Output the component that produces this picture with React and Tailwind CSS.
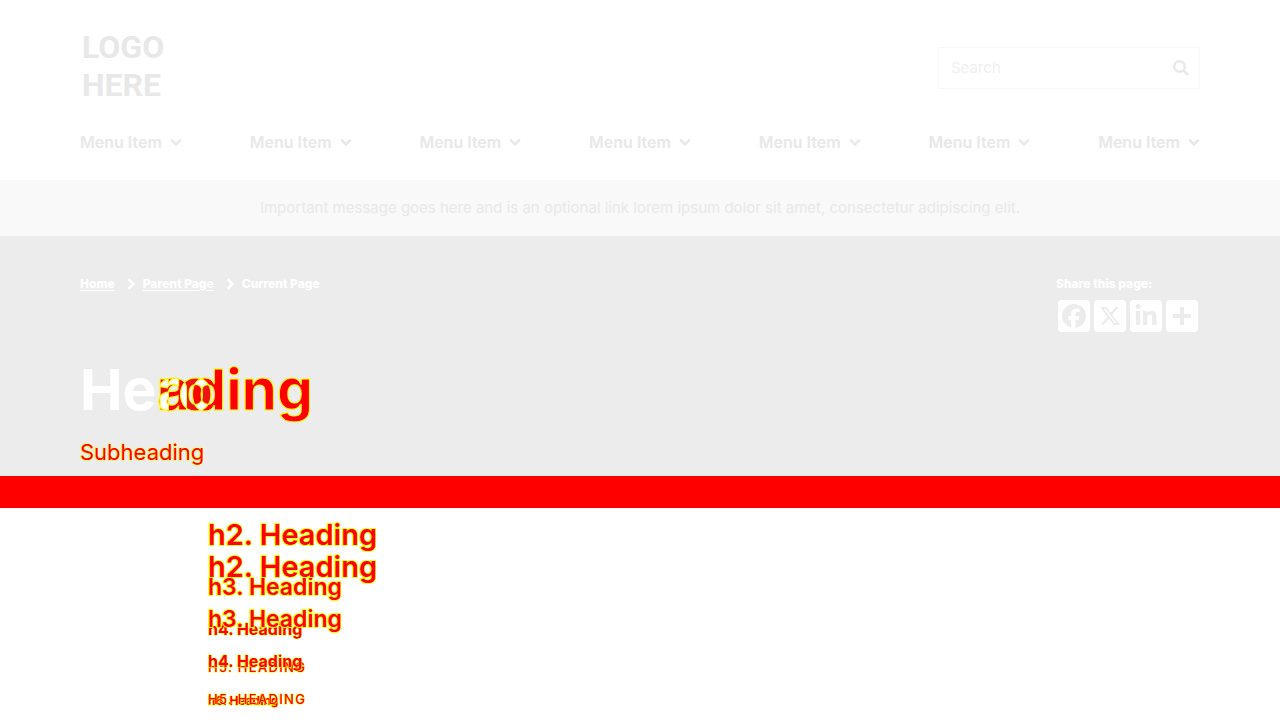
import React from "react";
import { FaFacebook, FaLinkedinIn, FaXTwitter } from "react-icons/fa6";

const menu = [1, 2, 3, 4, 5, 6, 7];

function Chevron({ className }) {
  return (
    <svg viewBox="0 0 12 12" aria-hidden="true" className={className} fill="none" stroke="currentColor" strokeWidth="2.6">
      <path d="M1.2 3.6 6 8.4l4.8-4.8" />
    </svg>
  );
}

function Share({ label, children }) {
  return (
    <a href="#share" aria-label={label} className="flex size-8 items-center justify-center rounded bg-white text-[#ececec]">
      {children}
    </a>
  );
}

function Headings({ className, last }) {
  return (
    <div className={`col-start-1 row-start-1 text-[#ff0000] [paint-order:stroke] ${className}`}>
      <h2 className="h-[52px] text-[29px] leading-9 font-semibold [-webkit-text-stroke:2px_#ffff00]">h2. Heading</h2>
      <h3 className="h-12 pt-0.5 text-[23px] leading-8 font-semibold [-webkit-text-stroke:2px_#ffff00]">h3. Heading</h3>
      <h4 className="h-[38px] text-base leading-6 font-bold [-webkit-text-stroke:1px_#ffff00]">h4. Heading</h4>
      <h5 className="h-[34px] pt-0.5 text-[13px] leading-5 font-medium tracking-widest uppercase [-webkit-text-stroke:1px_#ffff00]">h5. Heading</h5>
      {last && <h6 className="pt-0.5 text-xs leading-5 font-bold [-webkit-text-stroke:1px_#ffff00]">h6. Heading</h6>}
    </div>
  );
}

export default function App() {
  return (
    <div className="h-screen overflow-hidden bg-white font-['Inter',sans-serif] text-base text-[#e8e8e8]">
      <header className="px-20">
        <div className="flex h-[124px] items-center justify-between pt-3">
          <a href="#home" className="pb-1 pl-0.5 font-['Roboto',sans-serif] text-[32px] leading-[38px] font-bold">
            LOGO<br />HERE
          </a>
          <form className="flex h-[42px] w-[262px] items-center border border-[#f7f7f7] px-3" role="search">
            <input type="text" aria-label="Search" placeholder="Search" className="min-w-0 flex-1 bg-transparent text-[15px] outline-none placeholder:text-[#f0f0f0]" />
            <button type="submit" aria-label="Submit search" className="-mr-0.5">
              <svg viewBox="0 0 16 16" className="size-4" fill="none" stroke="currentColor" strokeWidth="2.4">
                <circle cx="6.5" cy="6.5" r="5.2" />
                <path d="m10.4 10.4 4.6 4.6" />
              </svg>
            </button>
          </form>
        </div>
        <nav className="flex h-14 items-start justify-between pt-1.5">
          {menu.map((n) => (
            <button key={n} type="button" className="flex items-center gap-2 leading-6 font-semibold">
              Menu Item
              <Chevron className="size-3" />
            </button>
          ))}
        </nav>
      </header>
      <div className="flex h-14 items-center justify-center bg-[#f9f9f9]">
        <p className="text-[15px] leading-6">Important message goes here and is an optional link lorem ipsum dolor sit amet, consectetur adipiscing elit.</p>
      </div>
      <section className="h-60 bg-[#ececec] px-20 pt-[38px] text-white">
        <div className="flex h-20 justify-between text-xs leading-5 font-extrabold">
          <nav aria-label="Breadcrumb" className="flex h-5 items-center gap-1.5">
            <a href="#home" className="underline underline-offset-2">Home</a>
            <Chevron className="ml-1 size-3 -rotate-90" />
            <a href="#parent" className="underline underline-offset-2">Parent Page</a>
            <Chevron className="ml-1 size-3 -rotate-90" />
            <span>Current Page</span>
          </nav>
          <div className="w-36">
            <p>Share this page:</p>
            <div className="mt-1.5 flex gap-1 px-0.5">
              <Share label="Facebook"><FaFacebook className="size-6" /></Share>
              <Share label="X"><FaXTwitter className="size-[22px]" /></Share>
              <Share label="LinkedIn"><FaLinkedinIn className="size-6" /></Share>
              <Share label="More">
                <svg viewBox="0 0 18 18" className="size-[18px]" fill="currentColor">
                  <path d="M7 0h4v7h7v4h-7v7H7v-7H0V7h7z" />
                </svg>
              </Share>
            </div>
          </div>
        </div>
        <div className="isolate grid bg-[#ececec] text-[57px] leading-[72px] font-bold">
          <h1 className="col-start-1 row-start-1">
            He<span className="text-[#ff0000]">ading</span>
          </h1>
          <div aria-hidden="true" className="col-start-1 row-start-1 text-[#00ffff] mix-blend-difference">
            <span className="text-transparent">He</span>ro
          </div>
          <div aria-hidden="true" className="relative col-start-1 row-start-1 text-transparent">
            He<span className="[-webkit-text-stroke:1px_#ffff00]">ading</span>
          </div>
          <div aria-hidden="true" className="relative col-start-1 row-start-1 text-transparent">
            He<span className="[-webkit-text-stroke:1px_#ffff00]">ro</span>
          </div>
        </div>
        <p className="mt-2.5 text-[22px] leading-8 text-[#ff0000] [-webkit-text-stroke:1px_#ffff00] [paint-order:stroke]">Subheading</p>
      </section>
      <div className="h-8 bg-[#ff0000]" />
      <main className="grid px-[208px] pt-[9px]">
        <Headings last />
        <Headings className="mt-8" />
      </main>
    </div>
  );
}
